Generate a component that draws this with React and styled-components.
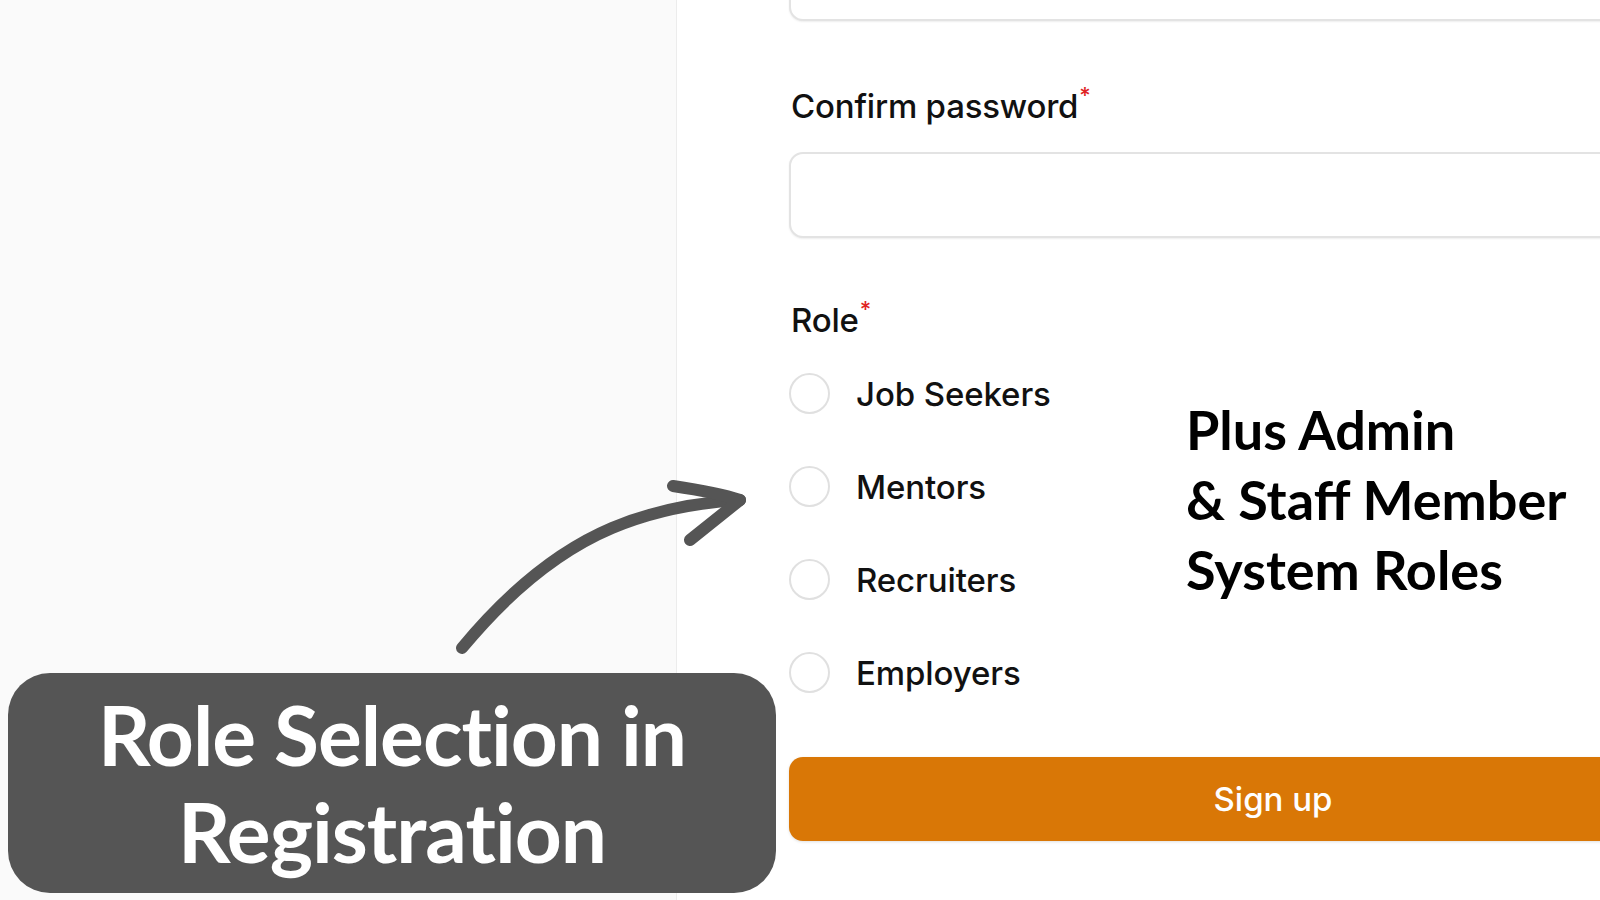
import React from "react";
import styled, { createGlobalStyle } from "styled-components";

const GlobalStyle = createGlobalStyle`
  html, body {
    margin: 0;
    padding: 0;
    width: 1600px;
    height: 900px;
    overflow: hidden;
    background: #ffffff;
  }
  * {
    box-sizing: border-box;
  }
`;

const Page = styled.div`
  position: relative;
  width: 1600px;
  height: 900px;
  display: flex;
  overflow: hidden;
  font-family: Inter, "Noto Sans", sans-serif;
  color: #111111;
`;

const SidePanel = styled.div`
  width: 677px;
  flex-shrink: 0;
  background: #fafafa;
  border-right: 1.5px solid #ececec;
`;

const FormArea = styled.div`
  flex: 1;
  padding-left: 112px;
  overflow: hidden;
`;

const Form = styled.div`
  width: 968px;
  display: flex;
  flex-direction: column;
`;

const Input = styled.div`
  height: 86px;
  border: 2px solid #e3e3e3;
  border-radius: 14px;
  background: #fff;
  box-shadow: 0 1px 2px rgba(0, 0, 0, 0.07);
  margin-top: ${(p) => p.$offset || 0}px;
`;

const Label = styled.div`
  font-size: 33px;
  font-weight: 500;
  line-height: 40px;
  letter-spacing: -0.2px;
  margin-top: ${(p) => p.$gap}px;
  margin-bottom: ${(p) => p.$after}px;
  padding-left: 2px;
`;

const Required = styled.span`
  color: #e02424;
  font-size: 22px;
  vertical-align: 15px;
  margin-left: 1px;
`;

const RadioList = styled.div`
  display: flex;
  flex-direction: column;
  gap: 52px;
`;

const RadioRow = styled.label`
  display: flex;
  align-items: center;
  gap: 26px;
  height: 41px;
  font-size: 33px;
  font-weight: 500;
  letter-spacing: -0.1px;
`;

const RadioCircle = styled.span`
  width: 41px;
  height: 41px;
  border-radius: 50%;
  border: 2px solid #e0e0e0;
  background: #fff;
  flex-shrink: 0;
`;

const SubmitButton = styled.button`
  margin-top: 64px;
  height: 84px;
  border: none;
  border-radius: 14px;
  background: #d97706;
  color: #fff;
  font-family: Inter, "Noto Sans", sans-serif;
  font-size: 33px;
  font-weight: 500;
  box-shadow: 0 1px 3px rgba(0, 0, 0, 0.12);
`;

const Callout = styled.div`
  position: absolute;
  left: 8px;
  top: 673px;
  width: 768px;
  height: 220px;
  border-radius: 42px;
  background: #555555;
  color: #ffffff;
  font-family: Lato, "Open Sans", sans-serif;
  font-weight: 700;
  font-size: 82px;
  line-height: 97px;
  letter-spacing: -1px;
  text-align: center;
  display: flex;
  align-items: center;
  justify-content: center;
`;

const Note = styled.div`
  position: absolute;
  left: 1186px;
  top: 395px;
  font-family: Lato, "Open Sans", sans-serif;
  font-weight: 700;
  font-size: 54px;
  line-height: 70px;
  color: #000;
`;

const ArrowSvg = styled.svg`
  position: absolute;
  left: 0;
  top: 0;
  pointer-events: none;
`;

const roles = ["Job Seekers", "Mentors", "Recruiters", "Employers"];

export default function App() {
  return (
    <>
      <GlobalStyle />
      <Page>
        <SidePanel />
        <FormArea>
          <Form>
            <Input $offset={-65} />
            <Label $gap={54} $after={26}>
              Confirm password<Required>*</Required>
            </Label>
            <Input />
            <Label $gap={51} $after={33}>
              Role<Required>*</Required>
            </Label>
            <RadioList>
              {roles.map((r) => (
                <RadioRow key={r}>
                  <RadioCircle />
                  {r}
                </RadioRow>
              ))}
            </RadioList>
            <SubmitButton>Sign up</SubmitButton>
          </Form>
        </FormArea>

        <ArrowSvg width="1600" height="900" viewBox="0 0 1600 900">
          <g
            fill="none"
            stroke="#555555"
            strokeWidth="12"
            strokeLinecap="round"
            strokeLinejoin="round"
          >
            <path d="M462 648 C 510 590, 560 550, 612 528 C 650 512, 690 503, 740 500" />
            <path d="M673 486 C 700 490, 722 494, 740 500 L 690 540" />
          </g>
        </ArrowSvg>

        <Note>
          Plus Admin
          <br />& Staff Member
          <br />
          System Roles
        </Note>

        <Callout>
          <div>
            Role Selection in
            <br />
            Registration
          </div>
        </Callout>
      </Page>
    </>
  );
}
